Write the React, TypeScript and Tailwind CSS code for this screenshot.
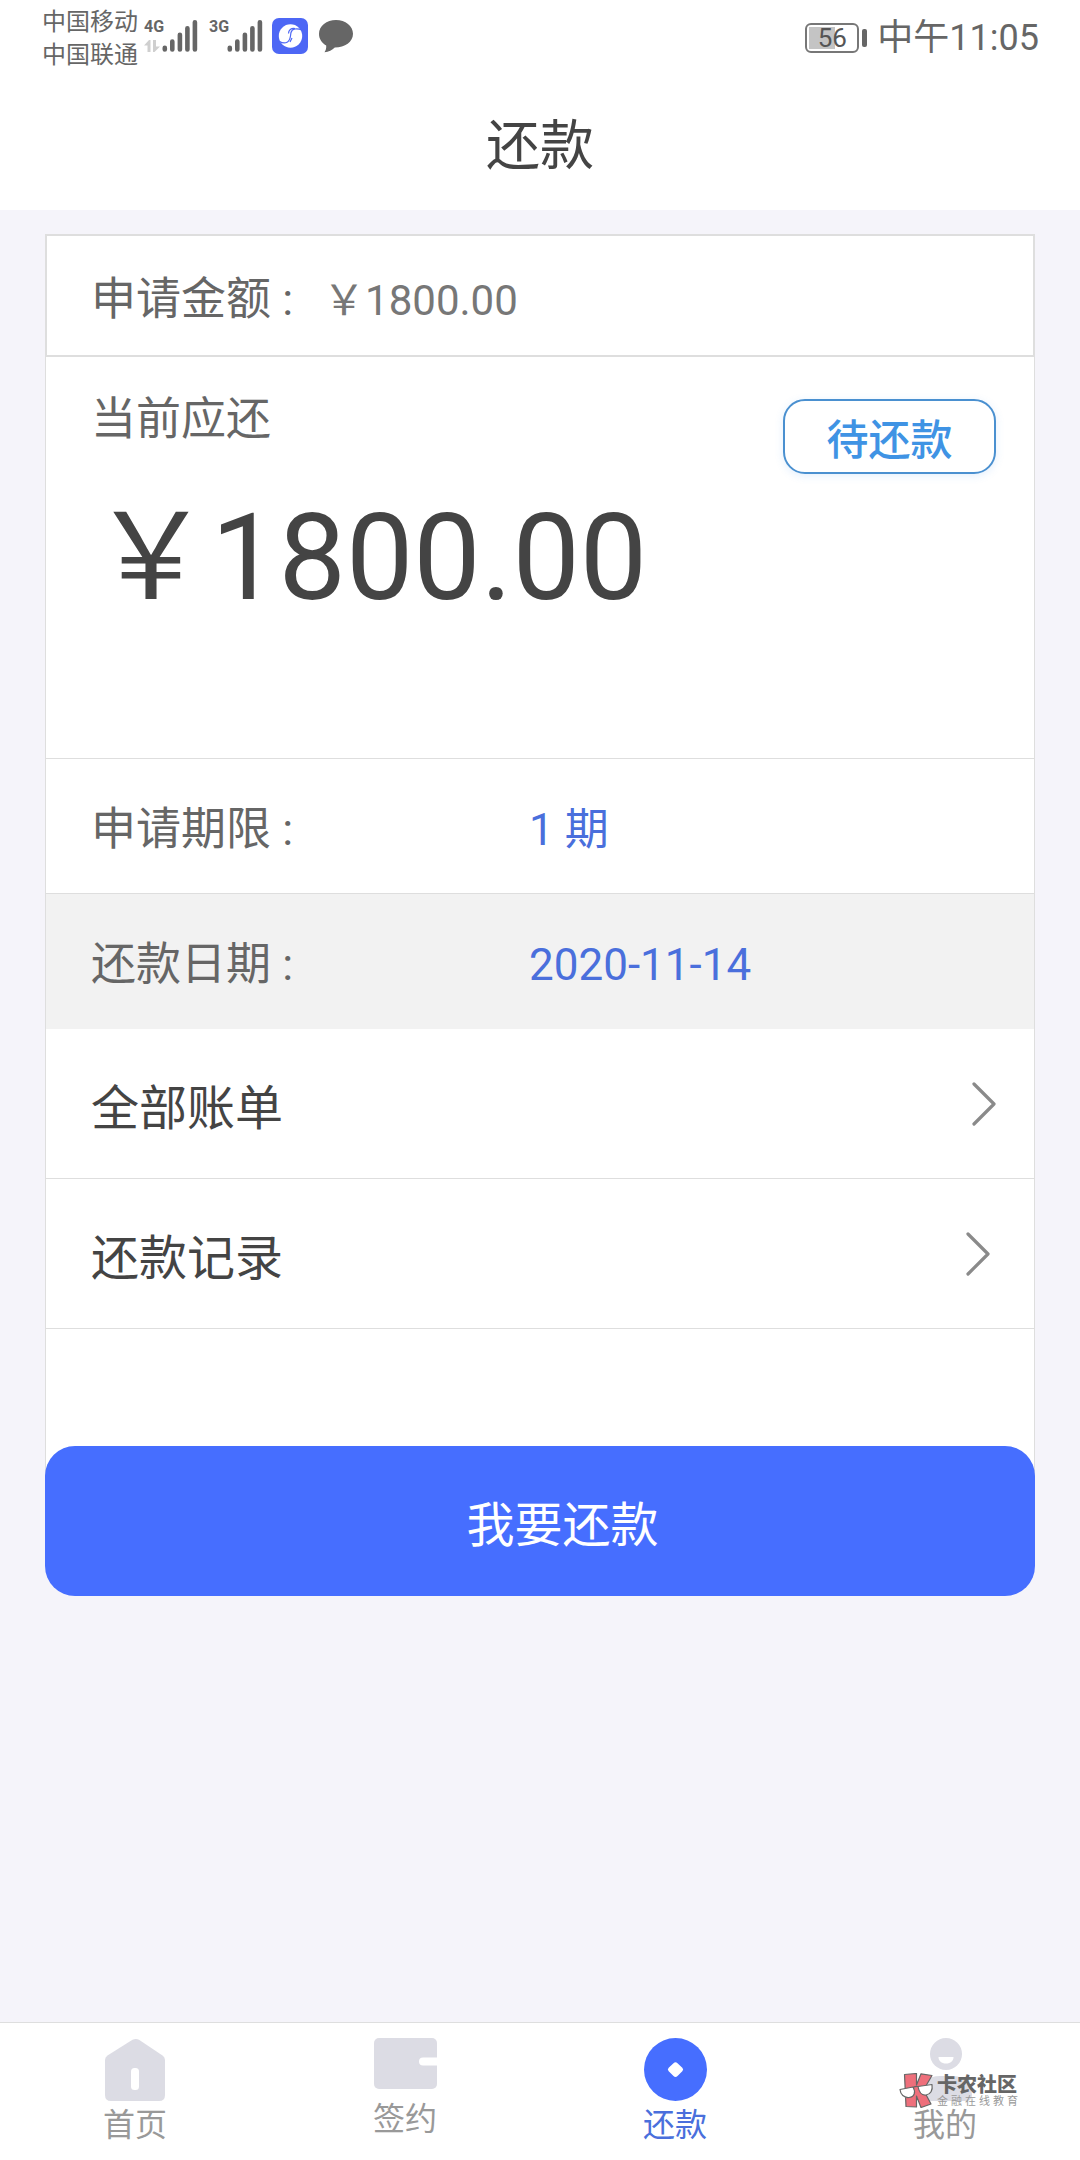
import type { ReactNode } from 'react'

const NUM = "font-['Roboto','Noto_Sans_CJK_SC',sans-serif] leading-none"

function SignalBars() {
  return (
    <svg width="36" height="34" viewBox="0 0 36 34" fill="none" stroke="#666" strokeWidth="4.6" strokeLinecap="round" aria-hidden="true">
      <path d="M2.8 30.5V28.8M10.3 30.5V22.6M17.9 30.5V15.8M25.4 30.5V9.2M32.9 30.5V3.3" />
    </svg>
  )
}

function NetworkLabel({ children }: { children: string }) {
  return <span className="font-['Roboto',sans-serif] text-[16px] leading-[16px] font-bold">{children}</span>
}

function DataArrows() {
  return (
    <svg width="16" height="12" viewBox="0 0 16 12" fill="#cfcfcf" aria-hidden="true">
      <path d="M0 5.5 5 0h1.500v12H3.500V5.500zM9 0h3v6.500h4L10.500 12H9z" />
    </svg>
  )
}

function AppBadge() {
  return (
    <svg width="36" height="36" viewBox="0 0 36 36" aria-hidden="true">
      <rect width="36" height="36" rx="7" fill="#4d67f5" />
      <circle cx="18.500" cy="18" r="11.700" fill="#fff" />
      <path d="M30 12c-5-2-10-1.500-11 2.500-.8 3.500 0 7-3.500 9.500-2.500 1.500-5.500 1-8-.5M23 10.500c-4-.5-6.500 1.500-6.500 5M20 20l-2 4" fill="none" stroke="#4d67f5" strokeWidth="1.200" />
    </svg>
  )
}

function ChatBubble() {
  return (
    <svg width="34" height="33" viewBox="0 0 34 33" fill="#666" aria-hidden="true">
      <path d="M17 0C7.600 0 0 6 0 13.800c0 5.200 2.700 9.200 7.200 11.600.2 2.600-.4 5-1.700 6.800 4.200-.3 7.700-2 10.300-4.700C26 27.500 34 22 34 13.800 34 6 26.400 0 17 0z" />
    </svg>
  )
}

function Battery({ level }: { level: number }) {
  return (
    <div className="flex items-center gap-[3px]">
      <div className="relative flex h-[30px] w-[54px] items-center justify-center rounded-[6px] border-2 border-[#777]">
        <div className="absolute inset-[2px]">
          <div className="h-full bg-[#c4c4c4]" style={{ width: `${level}%` }} />
        </div>
        <span className={`relative text-[26px] text-[#555] ${NUM}`}>{level}</span>
      </div>
      <div className="h-[18px] w-[5px] rounded-[2px] bg-[#666]" />
    </div>
  )
}

function StatusBar() {
  return (
    <div className="flex h-[72px] items-start justify-between pr-[41px] pl-[42px] text-[#666]">
      <div className="flex items-start">
        <div className="pt-[3px] text-[24px] leading-[33px]">
          <p>中国移动</p>
          <p>中国联通</p>
        </div>
        <div className="flex pt-[19px] pl-[6px]">
          <div className="flex w-[18px] flex-col gap-[5px]">
            <NetworkLabel>4G</NetworkLabel>
            <DataArrows />
          </div>
          <SignalBars />
        </div>
        <div className="flex pt-[19px] pl-[11px]">
          <div className="flex w-[18px] flex-col">
            <NetworkLabel>3G</NetworkLabel>
          </div>
          <SignalBars />
        </div>
        <div className="pt-[18px] pl-[9px]">
          <AppBadge />
        </div>
        <div className="pt-[20px] pl-[11px]">
          <ChatBubble />
        </div>
      </div>
      <div className="flex items-center gap-[10px] pt-[20px]">
        <Battery level={56} />
        <span className={`text-[36px] ${NUM}`}>中午11:05</span>
      </div>
    </div>
  )
}

function Colon() {
  return <span className={`whitespace-pre ${NUM}`}>{' :'}</span>
}

function Chevron() {
  return (
    <svg width="24" height="44" viewBox="0 0 24 44" fill="none" stroke="#8a8a8a" strokeWidth="3.200" strokeLinecap="round" strokeLinejoin="round" aria-hidden="true">
      <path d="M2 2 22 22 2 42" />
    </svg>
  )
}

function DetailRow({ label, value, className }: { label: string; value: string; className: string }) {
  return (
    <div className={`flex items-baseline border-t border-[#dedede] pl-[45px] ${className}`}>
      <dt className="w-[438px] text-[45px] leading-[134px] text-[#666]">
        {label}
        <Colon />
      </dt>
      <dd className={`text-[44px] text-[#4a6fdc] ${NUM}`}>{value}</dd>
    </div>
  )
}

function LinkRow({ label, className }: { label: string; className: string }) {
  return (
    <a href="#" className={`flex h-[150px] items-center justify-between border-b border-[#dedede] pl-[45px] text-[48px] leading-[48px] text-[#444] ${className}`}>
      {label}
      <Chevron />
    </a>
  )
}

function HomeIcon() {
  return (
    <svg width="60" height="63" viewBox="0 0 60 63" aria-hidden="true">
      <path d="M27.500 1.800Q31 0 34 1.800L57.500 17.500Q60 19.200 60 22V57Q60 63 54 63H6Q0 63 0 57V22Q0 19.200 2.500 17.500z" fill="#dcdce4" />
      <rect x="26" y="30" width="8" height="22" rx="3.500" fill="#fff" />
    </svg>
  )
}

function WalletIcon() {
  return (
    <svg width="63" height="51" viewBox="0 0 63 51" aria-hidden="true">
      <rect width="63" height="51" rx="5" fill="#dcdce4" />
      <path d="M63 19.500H49a4 4 0 0 0 0 8H63z" fill="#fff" />
    </svg>
  )
}

function CoinIcon() {
  return (
    <svg width="63" height="63" viewBox="0 0 63 63" aria-hidden="true">
      <circle cx="31.500" cy="31.500" r="31.500" fill="#466eff" />
      <path d="M29.500 25.200q2-1.800 4 0l4.800 4.500q1.800 1.800 0 3.600l-4.800 4.800q-2 1.800-4 0l-4.800-4.800q-1.800-1.800 0-3.600z" fill="#fff" />
    </svg>
  )
}

function PersonIcon() {
  return (
    <svg width="63" height="63" viewBox="0 0 63 63" aria-hidden="true">
      <circle cx="32" cy="16" r="16" fill="#dcdce4" />
      <path d="M24.500 19h15c0 4-3 6.500-7.500 6.500S24.500 23 24.500 19z" fill="#fff" />
      <path d="M6 57c0-12 8-19 20-19h12c12 0 20 7 20 19q0 6-6 6H12q-6 0-6-6z" fill="#dcdce4" />
    </svg>
  )
}

function Watermark() {
  return (
    <div className="pointer-events-none absolute top-[50px] left-1/2 -ml-[46px] flex gap-[3px]">
      <svg width="35" height="35" viewBox="0 0 35 35" stroke="#666" strokeWidth="1.200" strokeLinejoin="round" aria-hidden="true">
        <path d="M5.500 1.500 17.500.5V12L22 .8 33 2.500 24.500 17 32 31l-10 3.500L17.500 23V34L7 33.500z" fill="#ee6f7b" />
        <path d="M1 16.500 14 14c3 5 1.500 10-4 10.500C5 25 1.500 21.500 1 16.500zM19 13.500l14-2c1 6-1.500 10-6 10.500-4 .5-7-3-8-8.500z" fill="#fff" />
        <path d="M14 14.500q2.500-1.500 5-1" fill="none" />
      </svg>
      <div>
        <p className="text-[20px] leading-[22px] font-black whitespace-nowrap text-[#666]">卡农社区</p>
        <p className="text-[11px] leading-[10px] tracking-[3px] whitespace-nowrap text-[#999]">金融在线教育</p>
      </div>
    </div>
  )
}

interface TabProps {
  label: string
  icon: ReactNode
  active?: boolean
  iconClass?: string
  children?: ReactNode
}

function Tab({ label, icon, active, iconClass = 'h-[63px]', children }: TabProps) {
  return (
    <a
      href="#"
      aria-current={active ? 'page' : undefined}
      className={`relative flex flex-1 flex-col items-center gap-[5px] pt-[15px] ${active ? 'text-[#4a6fdc]' : 'text-[#999]'}`}
    >
      <span className={iconClass}>{icon}</span>
      <span className="text-[32px] leading-[32px]">{label}</span>
      {children}
    </a>
  )
}

export default function App() {
  return (
    <div className="flex min-h-screen flex-col bg-[#f5f4fa] font-['Noto_Sans_CJK_SC',sans-serif]">
      <header className="bg-white">
        <StatusBar />
        <h1 className="flex h-[138px] items-center justify-center text-[54px] text-[#444]">还款</h1>
      </header>

      <main className="flex-1 px-[45px] pt-[24px]">
        <section className="bg-white">
          <div className="flex h-[123px] items-baseline gap-[30px] border-2 border-[#dedede] pl-[44px]">
            <span className="text-[45px] leading-[119px] text-[#666]">
              申请金额
              <Colon />
            </span>
            <span className={`text-[42px] text-[#777] ${NUM}`}>￥1800.00</span>
          </div>

          <div className="border-x border-[#dedede] pb-[147px]">
            <div className="pt-[37px] pb-[140px] pl-[45px]">
              <div className="flex items-start justify-between pr-[38px]">
                <h2 className="text-[45px] leading-[44px] text-[#666]">当前应还</h2>
                <span className="mt-[5px] flex h-[75px] w-[213px] items-center justify-center rounded-[22px] border-2 border-[#4a90d0] text-[42px] leading-[42px] font-medium text-[#3f93e4] shadow-[0_2px_8px_rgba(64,150,240,0.15)]">
                  待还款
                </span>
              </div>
              <p className={`mt-[24px] text-[120px] text-[#444] ${NUM}`}>￥1800.00</p>
            </div>

            <dl>
              <DetailRow label="申请期限" value="1 期" className="h-[135px]" />
              <DetailRow label="还款日期" value="2020-11-14" className="h-[136px] bg-[#f2f2f2]" />
            </dl>

            <LinkRow label="全部账单" className="pr-[38px]" />
            <LinkRow label="还款记录" className="pr-[44px]" />
          </div>
        </section>

        {/* Pay button sits over the card's bottom edge */}
        <button type="button" className="relative -mt-[30px] block h-[150px] w-full rounded-[30px] bg-[#466eff] pl-[45px] text-[48px] leading-[48px] text-white">
          我要还款
        </button>
      </main>

      <nav className="flex h-[138px] border-t border-[#dedede] bg-white">
        <Tab label="首页" icon={<HomeIcon />} />
        <Tab label="签约" icon={<WalletIcon />} iconClass="h-[57px]" />
        <Tab label="还款" icon={<CoinIcon />} active />
        <Tab label="我的" icon={<PersonIcon />}>
          <Watermark />
        </Tab>
      </nav>
    </div>
  )
}
